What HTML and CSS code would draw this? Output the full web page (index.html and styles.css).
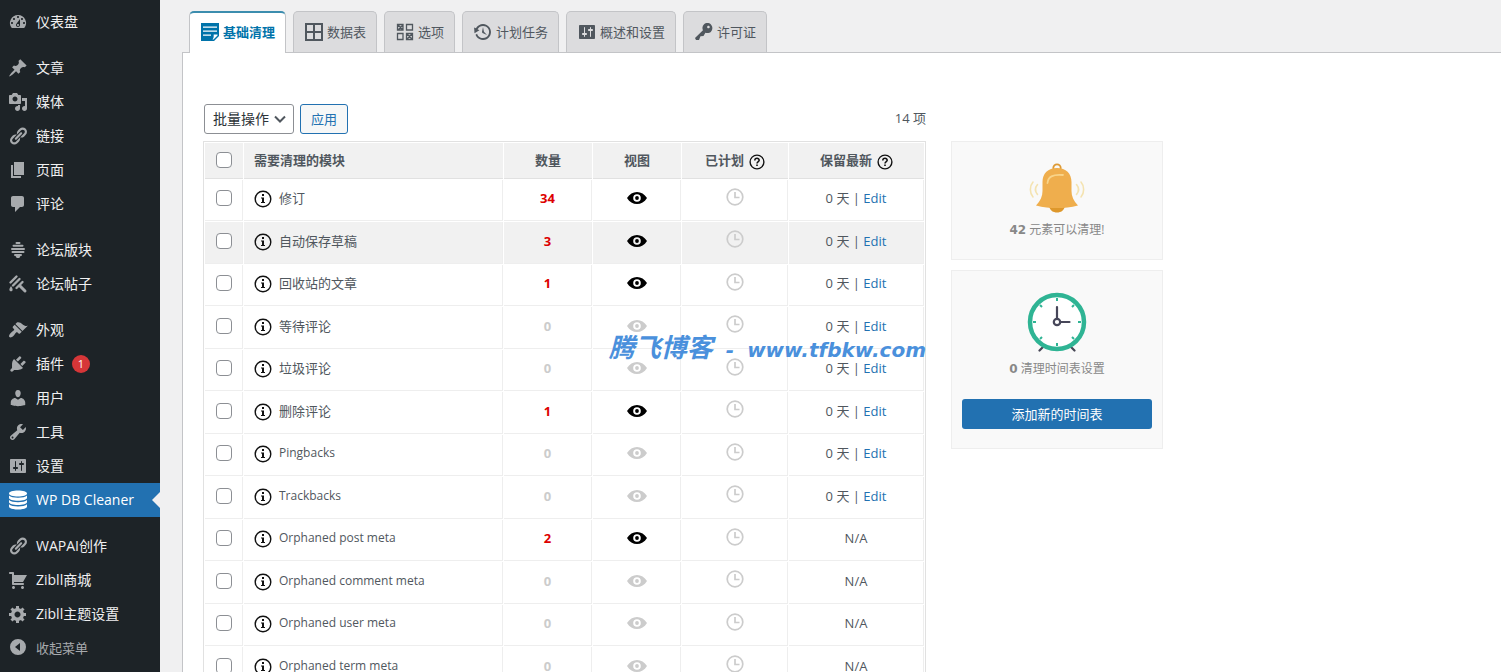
FILE: index.html
```html
<!DOCTYPE html>
<html lang="zh-CN">
<head>
    <meta charset="utf-8">
    <title>WP DB Cleaner</title>
    <link rel="stylesheet" href="styles.css">
</head>
<body>
    <svg class="icon-defs" width="0" height="0" aria-hidden="true">
        <symbol id="i-dashboard" viewBox="0 0 20 20"><path fill-rule="evenodd" d="M3.76 16h12.48A7.998 7.998 0 0 0 10 3a7.998 7.998 0 0 0-6.24 13zM10 4c.55 0 1 .45 1 1s-.45 1-1 1-1-.45-1-1 .45-1 1-1zM6 6c.55 0 1 .45 1 1s-.45 1-1 1-1-.45-1-1 .45-1 1-1zm8 0c.55 0 1 .45 1 1s-.45 1-1 1-1-.45-1-1 .45-1 1-1zm-5.37 5.55L12 7v6c0 1.1-.9 2-2 2s-2-.9-2-2c0-.57.24-1.08.63-1.45zM4 10c.55 0 1 .45 1 1s-.45 1-1 1-1-.45-1-1 .45-1 1-1zm12 0c.55 0 1 .45 1 1s-.45 1-1 1-1-.45-1-1 .45-1 1-1zm-5 3c0-.55-.45-1-1-1s-1 .45-1 1 .45 1 1 1 1-.45 1-1z"/></symbol>
        <symbol id="i-post" viewBox="0 0 20 20"><path d="M10.44 3.02l1.82-1.82 6.36 6.35-1.83 1.82c-1.05-.68-2.48-.57-3.41.36l-.75.75c-.92.93-1.04 2.35-.35 3.41l-1.83 1.82-2.41-2.41-2.8 2.79c-.42.42-3.38 2.71-3.8 2.29s1.86-3.39 2.28-3.81l2.79-2.79L4.1 9.36l1.83-1.82c1.05.69 2.48.57 3.4-.36l.75-.75c.93-.92 1.05-2.35.36-3.41z"/></symbol>
        <symbol id="i-media" viewBox="0 0 20 20"><path fill-rule="evenodd" d="M13 11V4c0-.55-.45-1-1-1h-1.67L9 1H5L3.67 3H2c-.55 0-1 .45-1 1v7c0 .55.45 1 1 1h10c.55 0 1-.45 1-1zM7 4.5c1.38 0 2.5 1.12 2.5 2.5S8.38 9.5 7 9.5 4.5 8.38 4.5 7 5.62 4.5 7 4.5zM14 6h5v10.5c0 1.38-1.12 2.5-2.5 2.5S14 17.88 14 16.5s1.12-2.5 2.5-2.5c.17 0 .34.02.5.05V9h-3V6zm-4 8.05V13h2v3.5c0 1.38-1.12 2.5-2.5 2.5S7 17.88 7 16.5 8.12 14 9.5 14c.17 0 .34.02.5.05z"/></symbol>
        <symbol id="i-links" viewBox="0 0 20 20"><path d="M17.74 2.76c1.68 1.69 1.68 4.41 0 6.1l-1.53 1.52c-1.12 1.12-2.7 1.47-4.14 1.09l2.62-2.61.76-.77.76-.76c.84-.84.84-2.2 0-3.04-.84-.85-2.2-.85-3.04 0l-.77.76-3.38 3.38c-.37-1.44-.02-3.02 1.1-4.14l1.52-1.53c1.69-1.68 4.42-1.68 6.1 0zM8.59 13.43l5.34-5.34c.42-.42.42-1.1 0-1.52-.44-.43-1.13-.39-1.53 0l-5.33 5.34c-.42.42-.42 1.1 0 1.52.44.43 1.13.39 1.52 0zm-.76 2.29l4.14-4.15c.38 1.44.03 3.02-1.09 4.14l-1.52 1.53c-1.69 1.68-4.41 1.68-6.1 0-1.68-1.68-1.68-4.42 0-6.1l1.53-1.52c1.12-1.12 2.7-1.47 4.14-1.1l-4.14 4.15c-.85.84-.85 2.2 0 3.05.84.84 2.2.84 3.04 0z"/></symbol>
        <symbol id="i-page" viewBox="0 0 20 20"><path d="M6 15V2h10v13H6zm-1 1h8v2H3V5h2v11z"/></symbol>
        <symbol id="i-comments" viewBox="0 0 20 20"><path d="M5 2h9c1.1 0 2 .9 2 2v7c0 1.1-.9 2-2 2h-2l-5 5v-5H5c-1.1 0-2-.9-2-2V4c0-1.1.9-2 2-2z"/></symbol>
        <symbol id="i-forum" viewBox="0 0 20 20"><g fill="none" stroke="currentColor" stroke-width="2" stroke-linecap="round"><path d="M8.500 3h3M5.500 5.800h9M4 8.900h12M4.500 12h11M7 15h6"/></g><path d="M7.500 16h5l-1.200 2H8.700z"/></symbol>
        <symbol id="i-topic" viewBox="0 0 20 20"><g fill="none" stroke="currentColor" stroke-width="2.400" stroke-linecap="round"><path d="M8.500 2.500l-6 6M11.500 5L5 11.500M14.500 8l-6 6"/><path stroke-width="3" d="M12 12l5 5"/></g><path d="M3 12c.8 1.500 1.800 2.600 1.600 4-.2 1.800-2.900 1.800-3.200 0C1.200 14.600 2.300 13.500 3 12z"/></symbol>
        <symbol id="i-appearance" viewBox="0 0 20 20"><path d="M14.480 11.060L7.410 3.990l1.500-1.500c.5-.56 2.300-.47 3.510.32 1.210.8 1.430 1.280 2.910 2.100 1.180.64 2.450 1.260 4.450.85zm-.71.71L6.700 4.700 4.930 6.470c-.39.39-.39 1.020 0 1.410l1.060 1.060c.39.39.39 1.030 0 1.420-.6.6-1.430 1.110-2.210 1.690-.35.26-.7.53-1.010.84C1.430 14.230.4 16.080 1.400 17.070c.99 1 2.840-.03 4.180-1.360.31-.31.58-.66.85-1.020.57-.78 1.080-1.610 1.690-2.210.39-.39 1.020-.39 1.410 0l1.060 1.060c.39.39 1.020.39 1.410 0z"/></symbol>
        <symbol id="i-plugins" viewBox="0 0 20 20"><path d="M13.110 4.360L9.870 7.600 8 5.730l3.240-3.240c.35-.34 1.050-.2 1.560.32.52.51.66 1.210.31 1.550zm-8 1.770l.91-1.120 9.010 9.010-1.190.84c-.71.71-2.630 1.160-3.820 1.160H6.140L4.900 17.260c-.59.59-1.540.59-2.120 0-.59-.58-.59-1.530 0-2.120l1.240-1.240v-3.880c0-1.130.4-3.190 1.090-3.890zm7.260 3.970l3.240-3.240c.34-.35 1.040-.21 1.550.31.52.51.66 1.210.31 1.550l-3.240 3.250z"/></symbol>
        <symbol id="i-users" viewBox="0 0 20 20"><path d="M10 9.250c-2.270 0-2.730-3.440-2.730-3.440C7 4.020 7.820 2 9.970 2c2.160 0 2.980 2.020 2.710 3.810 0 0-.41 3.440-2.680 3.440zm0 2.570L12.720 10c2.390 0 4.520 2.330 4.520 4.530v2.490s-3.650 1.130-7.240 1.130c-3.650 0-7.240-1.130-7.240-1.130v-2.490c0-2.250 1.940-4.480 4.470-4.480z"/></symbol>
        <symbol id="i-tools" viewBox="0 0 20 20"><path fill-rule="evenodd" d="M16.680 9.770c-1.340 1.340-3.300 1.670-4.950.99l-5.410 6.520c-.99.99-2.590.99-3.580 0s-.99-2.590 0-3.570l6.520-5.420c-.68-1.650-.35-3.610.99-4.950 1.280-1.280 3.120-1.620 4.720-1.060l-2.890 2.890 2.820 2.820 2.860-2.870c.53 1.580.18 3.390-1.080 4.650zM3.810 16.210c.4.39 1.040.39 1.430 0 .4-.4.4-1.040 0-1.430-.39-.4-1.030-.4-1.430 0-.39.39-.39 1.030 0 1.430z"/></symbol>
        <symbol id="i-settings" viewBox="0 0 20 20"><path fill-rule="evenodd" d="M18 16V4c0-.55-.45-1-1-1H3c-.55 0-1 .45-1 1v12c0 .55.45 1 1 1h14c.55 0 1-.45 1-1zM8 11h1c.55 0 1 .45 1 1s-.45 1-1 1H8v1.500c0 .28-.22.5-.5.5s-.5-.22-.5-.5V13H6c-.55 0-1-.45-1-1s.45-1 1-1h1V5.500c0-.28.22-.5.5-.5s.5.22.5.5V11zm5-2h-1c-.55 0-1-.45-1-1s.45-1 1-1h1V5.500c0-.28.22-.5.5-.5s.5.22.5.5V7h1c.55 0 1 .45 1 1s-.45 1-1 1h-1v5.500c0 .28-.22.5-.5.5s-.5-.22-.5-.5V9z"/></symbol>
        <symbol id="i-database" viewBox="0 0 20 20"><path d="M1 3.500C1 1.700 5 .5 10 .5s9 1.200 9 3-4 3-9 3-9-1.200-9-3zM1 5.500c1.500 1.600 5 2.200 9 2.200s7.500-.6 9-2.200v2.300c0 1.800-4 3-9 3s-9-1.200-9-3zM1 10c1.500 1.600 5 2.200 9 2.200s7.500-.6 9-2.200v2c0 1.800-4 3-9 3s-9-1.200-9-3zM1 14.300c1.500 1.600 5 2.200 9 2.200s7.500-.6 9-2.200v2.200c0 1.800-4 3-9 3s-9-1.200-9-3z"/></symbol>
        <symbol id="i-cart" viewBox="0 0 20 20"><path d="M6 13h9c.55 0 1 .45 1 1s-.45 1-1 1H5c-.55 0-1-.45-1-1V4H2c-.55 0-1-.45-1-1s.45-1 1-1h3c.55 0 1 .45 1 1v2h13l-4 7H6v1zm-.5 3c.83 0 1.500.67 1.500 1.500S6.330 19 5.500 19 4 18.330 4 17.500 4.670 16 5.500 16zm9 0c.83 0 1.500.67 1.500 1.500s-.67 1.500-1.500 1.500-1.500-.67-1.500-1.500.67-1.500 1.500-1.500z"/></symbol>
        <symbol id="i-gear" viewBox="0 0 20 20"><path fill-rule="evenodd" d="M18 12h-2.180c-.17.7-.44 1.350-.81 1.930l1.540 1.540-2.100 2.100-1.540-1.540c-.58.36-1.230.63-1.910.79V19H8v-2.180c-.68-.16-1.330-.43-1.910-.79l-1.540 1.540-2.120-2.120 1.540-1.540c-.36-.58-.63-1.230-.79-1.910H1V9.030h2.170c.16-.7.44-1.350.8-1.940L2.430 5.550l2.100-2.100 1.540 1.540c.58-.37 1.240-.64 1.930-.81V2h3v2.180c.68.16 1.330.43 1.910.79l1.540-1.540 2.120 2.120-1.540 1.540c.36.59.64 1.240.8 1.940H18V12zm-8.500 1.500c1.660 0 3-1.340 3-3s-1.340-3-3-3-3 1.340-3 3 1.340 3 3 3z"/></symbol>
        <symbol id="i-collapse" viewBox="0 0 20 20"><path fill-rule="evenodd" d="M10 2a8 8 0 1 0 0 16 8 8 0 0 0 0-16zm2 4v8l-5-4z"/></symbol>
        <symbol id="i-note" viewBox="0 0 20 20"><path fill-rule="evenodd" d="M1 1h18v13l-5 5H1zM3 4.500v1.300h14V4.500zm0 4v1.300h14V8.500zm0 4v1.300h8v-1.300zm9.500 5h1l4-4v-1h-3.800c0 2 .2 3.500-1.200 5z"/></symbol>
        <symbol id="i-grid" viewBox="0 0 20 20"><path fill="none" stroke="currentColor" stroke-width="2" d="M2 2h16v16H2zM10 2v16M2 10h16"/></symbol>
        <symbol id="i-options" viewBox="0 0 20 20"><path fill="none" stroke="currentColor" stroke-width="1.300" d="M2.500 2.500h5.500v5.500h-5.500zM11.500 2.500h6v5.500h-6zM2.500 11.500h5.500v6h-5.500zM11.500 11.500h6v6h-6zM3 3l5 5M8 3L3 8M12 12l5 5M17 12l-5 5"/></symbol>
        <symbol id="i-backup" viewBox="0 0 20 20"><path d="M13.650 2.880c3.930 2.010 5.480 6.840 3.470 10.770s-6.830 5.480-10.770 3.470c-1.870-.96-3.200-2.560-3.860-4.400l1.640-1.030c.45 1.570 1.520 2.950 3.080 3.760 3.010 1.540 6.690.35 8.230-2.660 1.550-3.010.36-6.690-2.650-8.240C9.780 3.010 6.100 4.200 4.560 7.210l1.880.97-4.950 3.080-.39-5.820 1.780.91C4.900 2.400 9.750.89 13.650 2.880zm-4.360 7.830C9.110 10.530 9 10.280 9 10c0-.07.03-.12.04-.19h-.01L10 5l.97 4.810L14 13l-4.500-2.120.02-.02c-.08-.04-.16-.09-.23-.15z"/></symbol>
        <symbol id="i-key" viewBox="0 0 20 20"><path fill-rule="evenodd" d="M16.950 2.580c1.960 1.950 1.960 5.120 0 7.070-1.510 1.510-3.750 1.840-5.590 1.010l-1.870 3.310-2.990.31L5 18H2l-1-2 7.950-7.690c-.92-1.870-.62-4.180.93-5.730 1.950-1.960 5.120-1.960 7.070 0zm-2.510 3.790c.74 0 1.330-.6 1.330-1.340 0-.73-.59-1.330-1.330-1.330-.73 0-1.330.6-1.330 1.330 0 .74.6 1.340 1.330 1.340z"/></symbol>
        <symbol id="i-info" viewBox="0 0 18 18"><circle cx="9" cy="9" r="7.800" fill="none" stroke="currentColor" stroke-width="1.400"/><path d="M8 4h2v2H8zM7 7.500h3V12h1v1H7v-1h1V8.500H7z"/></symbol>
        <symbol id="i-help" viewBox="0 0 16 16"><circle cx="8" cy="8" r="6.900" fill="none" stroke="currentColor" stroke-width="1.400"/><path fill="none" stroke="currentColor" stroke-width="1.500" d="M5.800 6.500c0-3 4.500-2.800 4.400-.2C10.200 7.600 8 7.700 8 9.500"/><path d="M7.200 10.500h1.600V12H7.200z"/></symbol>
        <symbol id="i-eye" viewBox="0 0 20 12"><path fill-rule="evenodd" d="M0 6c2.500-4 6-6 10-6s7.500 2 10 6c-2.500 4-6 6-10 6S2.500 10 0 6zm10-3.800a3.800 3.800 0 1 0 0 7.600 3.800 3.800 0 0 0 0-7.600z"/><circle cx="10" cy="6" r="1.900"/></symbol>
        <symbol id="i-clock" viewBox="0 0 18 18"><path fill="none" stroke="currentColor" stroke-width="1.700" d="M9 1.200a7.800 7.800 0 1 0 0 15.600A7.800 7.800 0 0 0 9 1.200zM9 4v5.500h4.500"/></symbol>
    </svg>

    <div class="wrap">
        <nav class="admin-menu">
            <ul>
                <li><a href="#"><svg class="icon"><use href="#i-dashboard"/></svg>仪表盘</a></li>
                <li class="separator"></li>
                <li><a href="#"><svg class="icon"><use href="#i-post"/></svg>文章</a></li>
                <li><a href="#"><svg class="icon"><use href="#i-media"/></svg>媒体</a></li>
                <li><a href="#"><svg class="icon"><use href="#i-links"/></svg>链接</a></li>
                <li><a href="#"><svg class="icon"><use href="#i-page"/></svg>页面</a></li>
                <li><a href="#"><svg class="icon"><use href="#i-comments"/></svg>评论</a></li>
                <li class="separator"></li>
                <li><a href="#"><svg class="icon"><use href="#i-forum"/></svg>论坛版块</a></li>
                <li><a href="#"><svg class="icon"><use href="#i-topic"/></svg>论坛帖子</a></li>
                <li class="separator"></li>
                <li><a href="#"><svg class="icon"><use href="#i-appearance"/></svg>外观</a></li>
                <li><a href="#"><svg class="icon"><use href="#i-plugins"/></svg>插件 <span class="update-count">1</span></a></li>
                <li><a href="#"><svg class="icon"><use href="#i-users"/></svg>用户</a></li>
                <li><a href="#"><svg class="icon"><use href="#i-tools"/></svg>工具</a></li>
                <li><a href="#"><svg class="icon"><use href="#i-settings"/></svg>设置</a></li>
                <li><a href="#" class="current"><svg class="icon"><use href="#i-database"/></svg>WP DB Cleaner</a></li>
                <li class="separator"></li>
                <li><a href="#"><svg class="icon"><use href="#i-links"/></svg>WAPAI创作</a></li>
                <li><a href="#"><svg class="icon"><use href="#i-cart"/></svg>Zibll商城</a></li>
                <li><a href="#"><svg class="icon"><use href="#i-gear"/></svg>Zibll主题设置</a></li>
                <li><button type="button" class="collapse-button"><svg class="icon"><use href="#i-collapse"/></svg>收起菜单</button></li>
            </ul>
        </nav>

        <main class="content">
            <nav class="tabs">
                <a href="#" class="tab active"><svg class="icon"><use href="#i-note"/></svg>基础清理</a>
                <a href="#" class="tab"><svg class="icon"><use href="#i-grid"/></svg>数据表</a>
                <a href="#" class="tab"><svg class="icon"><use href="#i-options"/></svg>选项</a>
                <a href="#" class="tab"><svg class="icon"><use href="#i-backup"/></svg>计划任务</a>
                <a href="#" class="tab"><svg class="icon"><use href="#i-settings"/></svg>概述和设置</a>
                <a href="#" class="tab"><svg class="icon"><use href="#i-key"/></svg>许可证</a>
            </nav>

            <div class="panel">
                <section class="cleaner">
                    <div class="table-nav">
                        <select class="bulk-select" aria-label="批量操作">
                            <option>批量操作</option>
                        </select>
                        <button type="button" class="apply-button">应用</button>
                        <span class="item-count">14 项</span>
                    </div>
                    <table class="clean-table">
                        <colgroup>
                            <col class="col-check">
                            <col class="col-name">
                            <col class="col-count">
                            <col class="col-view">
                            <col class="col-scheduled">
                            <col class="col-keep">
                        </colgroup>
                        <thead>
                            <tr>
                                <th><input type="checkbox" aria-label="全选"></th>
                                <th class="name">需要清理的模块</th>
                                <th>数量</th>
                                <th>视图</th>
                                <th><span class="with-help">已计划 <svg class="help-icon"><use href="#i-help"/></svg></span></th>
                                <th><span class="with-help">保留最新 <svg class="help-icon"><use href="#i-help"/></svg></span></th>
                            </tr>
                        </thead>
                        <tbody id="clean-rows"></tbody>
                    </table>
                    <div class="watermark">
                        <span class="site-name">腾飞博客</span>
                        <span>-</span>
                        <span>www.tfbkw.com</span>
                    </div>
                </section>

                <aside class="side">
                    <div class="card">
                        <svg class="card-icon bell" viewBox="0 0 60 50">
                            <circle cx="30" cy="5" r="3.700" fill="none" stroke="#dd9a35" stroke-width="1.800"/>
                            <path fill="#de982c" d="M22 43h16c-1 4.500-4 6.500-8 6.500S23 47.500 22 43z"/>
                            <path fill="#efae4d" d="M30 5c9 0 14.500 5.500 14.500 14v9c0 5 2 10 6.500 14.500-7 2-14 2.500-21 2.500S16 44.500 9 42.500c4.500-4.500 6.500-9.500 6.500-14.500v-9C15.500 10.500 21 5 30 5z"/>
                            <path fill="none" stroke="#f8d48a" stroke-width="1.800" stroke-linecap="round" d="M20.500 20c.5-6 5-9 15.500-8"/>
                            <g fill="none" stroke="#f4e3b0" stroke-width="1.600" stroke-linecap="round"><path d="M6 19c-3.500 4-3.500 11 0 15M10.500 21.500c-2.500 3-2.500 7 0 10M54 19c3.500 4 3.500 11 0 15M49.500 21.500c2.500 3 2.500 7 0 10"/></g>
                        </svg>
                        <p><b>42</b> 元素可以清理!</p>
                    </div>
                    <div class="card">
                        <svg class="card-icon clock" viewBox="0 0 60 60">
                            <path stroke="#464655" stroke-width="2.200" stroke-linecap="round" d="M16 55l-3.500 3.500M44 55l3.500 3.500"/>
                            <circle cx="30" cy="30" r="27" fill="#fff" stroke="#2fb494" stroke-width="4.500"/>
                            <path stroke="#2fb494" stroke-width="2" d="M30 6v3M30 51v3M6 30h3M51 30h3M13 13l2 2M45 45l2 2M47 13l-2 2M15 45l-2 2"/>
                            <path stroke="#464659" stroke-width="2.200" stroke-linecap="round" d="M30 27V15M33 30h9.500"/>
                            <circle cx="30" cy="30" r="3.200" fill="#fff" stroke="#464659" stroke-width="2.200"/>
                        </svg>
                        <p><b>0</b> 清理时间表设置</p>
                        <button type="button" class="primary-button">添加新的时间表</button>
                    </div>
                </aside>
            </div>
        </main>
    </div>

    <script>
        const modules = [
            { name: '修订', count: 34, keep: true },
            { name: '自动保存草稿', count: 3, keep: true, hover: true },
            { name: '回收站的文章', count: 1, keep: true },
            { name: '等待评论', count: 0, keep: true },
            { name: '垃圾评论', count: 0, keep: true },
            { name: '删除评论', count: 1, keep: true },
            { name: 'Pingbacks', count: 0, keep: true, latin: true },
            { name: 'Trackbacks', count: 0, keep: true, latin: true },
            { name: 'Orphaned post meta', count: 2, latin: true },
            { name: 'Orphaned comment meta', count: 0, latin: true },
            { name: 'Orphaned user meta', count: 0, latin: true },
            { name: 'Orphaned term meta', count: 0, latin: true }
        ];

        document.getElementById('clean-rows').innerHTML = modules.map(function(m, i) {
            const state = m.count > 0 ? 'has-items' : 'empty';
            return `
                <tr class="${state}${m.hover ? ' highlighted' : ''}">
                    <td><input type="checkbox" id="module-${i}"></td>
                    <td class="name${m.latin ? ' latin' : ''}">
                        <label for="module-${i}"><svg class="info-icon"><use href="#i-info"/></svg>${m.name}</label>
                    </td>
                    <td class="count">${m.count}</td>
                    <td><svg class="eye-icon"><use href="#i-eye"/></svg></td>
                    <td class="scheduled"><svg class="clock-icon"><use href="#i-clock"/></svg></td>
                    <td>${m.keep ? '0 天 | <a href="#">Edit</a>' : 'N/A'}</td>
                </tr>`;
        }).join('');
    </script>
</body>
</html>
```
FILE: styles.css
```css
* {
    box-sizing: border-box;
}
body {
    margin: 0;
    background: #f0f0f1;
    color: #50575e;
    font-family: "Open Sans", "Noto Sans CJK SC", sans-serif;
    font-size: 13px;
    line-height: 20px;
}
button, select {
    font-family: inherit;
}
a {
    color: #2271b1;
    text-decoration: none;
}
svg {
    fill: currentColor;
}
.icon-defs {
    position: absolute;
}
.icon {
    width: 20px;
    height: 20px;
    flex: none;
}
.wrap {
    display: flex;
    height: 100vh;
    overflow: hidden;
}

/* left menu */
.admin-menu {
    flex: 0 0 160px;
    background: #1d2327;
    font-size: 14px;
}
.admin-menu ul {
    list-style: none;
    margin: 0;
    padding: 5px 0 0;
}
.admin-menu .separator {
    height: 12px;
}
.admin-menu a,
.collapse-button {
    display: flex;
    align-items: center;
    gap: 8px;
    width: 100%;
    height: 34px;
    padding: 0 8px;
    color: #f0f0f1;
}
.admin-menu .icon {
    color: #a7aaad;
}
.admin-menu .current {
    position: relative;
    background: #2271b1;
    color: #fff;
}
.admin-menu .current .icon {
    color: #fff;
}
.admin-menu .current::after {
    content: "";
    position: absolute;
    right: 0;
    top: 9px;
    border: 8px solid transparent;
    border-right-color: #f0f0f1;
    border-left: 0;
}
.update-count {
    width: 18px;
    height: 18px;
    border-radius: 9px;
    background: #d63638;
    color: #fff;
    font-size: 11px;
    line-height: 18px;
    text-align: center;
}
.collapse-button {
    padding-bottom: 2px;
    border: 0;
    background: none;
    color: #a7aaad;
    font-size: 13px;
    cursor: pointer;
}

/* tabs */
.content {
    flex: 1;
    min-width: 0;
    display: flex;
    flex-direction: column;
    padding: 11px 0 0 22px;
}
.tabs {
    display: flex;
    gap: 7px;
    padding-left: 7px;
}
.tab {
    display: flex;
    align-items: center;
    gap: 3px;
    height: 41px;
    padding: 0 10px;
    border: 1px solid #c3c4c7;
    border-bottom: 0;
    border-radius: 5px 5px 0 0;
    background: #dcdcde;
    color: #50575e;
}
.tab.active {
    height: 42px;
    margin-bottom: -1px;
    padding-bottom: 2px;
    border-top: 2px solid #3c8dae;
    background: #fff;
    color: #0073aa;
    font-weight: bold;
    z-index: 1;
}

/* panel */
.panel {
    flex: 1;
    display: flex;
    align-items: flex-start;
    gap: 25px;
    padding: 51px 20px 0;
    border: 1px solid #c3c4c7;
    border-width: 1px 0 0 1px;
    background: #fff;
}
.cleaner {
    position: relative;
    flex: 0 1 723px;
}
.table-nav {
    display: flex;
    align-items: center;
    gap: 6px;
    padding-left: 1px;
    margin-bottom: 7px;
}
.bulk-select {
    appearance: none;
    width: 90px;
    height: 30px;
    padding: 0 8px 2px;
    border: 1px solid #8c8f94;
    border-radius: 3px;
    background: #fff url("data:image/svg+xml,%3Csvg xmlns='http://www.w3.org/2000/svg' width='12' height='8' viewBox='0 0 12 8'%3E%3Cpath d='M1 1.500l5 5 5-5' fill='none' stroke='%2350575e' stroke-width='2'/%3E%3C/svg%3E") no-repeat right 7px center;
    color: #2c3338;
    font-size: 14px;
}
.apply-button {
    width: 48px;
    height: 30px;
    padding: 0 0 2px;
    border: 1px solid #2271b1;
    border-radius: 3px;
    background: #f6f7f7;
    color: #2271b1;
    font-size: 13px;
}
.item-count {
    margin-left: auto;
    padding-bottom: 2px;
}

.clean-table {
    width: 100%;
    table-layout: fixed;
    border: 1px solid #e1e1e1;
    border-collapse: separate;
    border-spacing: 1px;
}
.col-check {
    width: 38px;
}
.col-count,
.col-view {
    width: 88px;
}
.col-scheduled {
    width: 106px;
}
.col-keep {
    width: 135px;
}
.clean-table th,
.clean-table td {
    padding: 0 0 4px;
    text-align: center;
    vertical-align: middle;
}
.clean-table th {
    height: 36px;
    padding: 0 0 2px;
    background: #f1f1f1;
    border-bottom: 1px solid #e1e1e1;
}
.clean-table td {
    height: 41px;
    border: 1px solid #eee;
    border-width: 0 1px 1px 0;
}
.clean-table tr:nth-child(even) td {
    height: 42px;
}
.clean-table .highlighted td {
    background: #f1f1f1;
}
.clean-table .name {
    padding-left: 10px;
    text-align: left;
}
.clean-table .latin {
    font-size: 12px;
}
.clean-table .scheduled {
    padding-bottom: 7px;
}
.clean-table label {
    display: flex;
    align-items: center;
    gap: 7px;
}
.clean-table svg,
.clean-table input {
    display: block;
    margin: 0 auto;
}
.clean-table input {
    appearance: none;
    width: 16px;
    height: 16px;
    border: 1px solid #8c8f94;
    border-radius: 4px;
    background: #fff;
}
.with-help {
    display: flex;
    align-items: center;
    justify-content: center;
    gap: 5px;
}
.clean-table .help-icon {
    width: 16px;
    height: 16px;
    margin: 4px 0 0;
    color: #111;
}
.clean-table .info-icon {
    width: 18px;
    height: 18px;
    margin: 2px 0 0;
    color: #111;
}
.eye-icon {
    width: 20px;
    height: 12px;
}
.clock-icon {
    width: 18px;
    height: 18px;
    color: #ccc;
}
.clean-table .count {
    font-weight: bold;
}
.has-items .count {
    color: #d00;
}
.has-items .eye-icon {
    color: #000;
}
.empty .count,
.empty .eye-icon {
    color: #ccc;
}
.watermark {
    position: absolute;
    right: 0;
    top: 226px;
    display: flex;
    align-items: baseline;
    gap: 13px;
    color: #4a90dc;
    font: italic bold 20px/32px "DejaVu Sans", "Noto Sans CJK SC", sans-serif;
    white-space: nowrap;
    pointer-events: none;
}
.site-name {
    font-family: "Noto Sans CJK SC", sans-serif;
    font-size: 26px;
}

/* right cards */
.side {
    display: flex;
    flex-direction: column;
    gap: 10px;
    flex: 0 0 212px;
    padding-top: 37px;
}
.card {
    display: flex;
    flex-direction: column;
    align-items: center;
    padding: 21px 10px 19px;
    border: 1px solid #eee;
    background: #f9f9f9;
    color: #888;
    font-size: 12px;
}
.card p {
    margin: 7px 0 0;
}
.card b {
    font-family: "DejaVu Sans", sans-serif;
}
.bell {
    width: 60px;
    height: 50px;
}
.clock {
    width: 60px;
    height: 60px;
}
.primary-button {
    width: 100%;
    height: 30px;
    margin-top: 20px;
    padding-bottom: 2px;
    border: 0;
    border-radius: 3px;
    background: #2271b1;
    color: #fff;
    font-size: 13px;
}
```
